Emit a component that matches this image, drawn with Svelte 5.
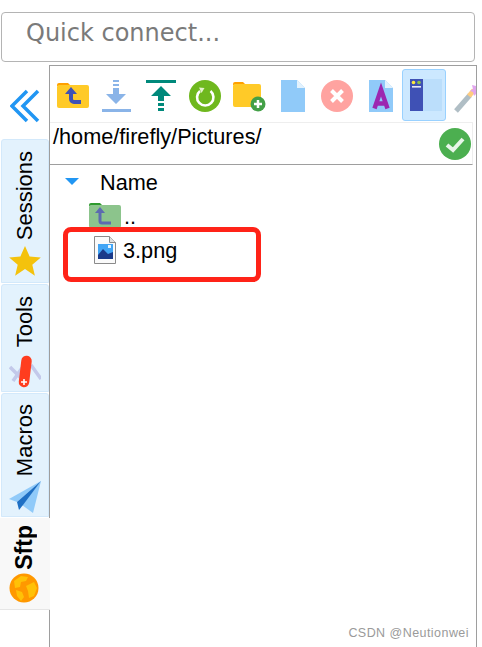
<script>
  const tabs = [
    { name: "Sessions", h: 144 },
    { name: "Tools", h: 108 },
    { name: "Macros", h: 124 },
    { name: "Sftp", h: 92, active: true }
  ];
</script>

<div class="page">
  <div class="quick">Quick connect...</div>

  <div class="body">
    <aside class="side">
      <div class="collapse">
        <svg width="30" height="34" viewBox="0 0 30 34" fill="none" stroke="#2196f3" stroke-width="3.5">
          <path d="M17 2 2 17l15 15" />
          <path d="M28 2 13 17l15 15" />
        </svg>
      </div>
      {#each tabs as t}
        <div class="tab {t.name.toLowerCase()}" class:active={t.active} style="height: {t.h}px">
          <span class="label">{t.name}</span>
          <span class="tab-icon">
            {#if t.name === "Sessions"}
              <svg width="32" height="32" viewBox="0 0 32 32"><path fill="#f4c20d" d="M16 1l4.6 10.4 11.2 1-8.5 7.4 2.6 11L16 24l-9.9 6.8 2.6-11L.2 12.4l11.2-1z" /></svg>
            {:else if t.name === "Tools"}
              <svg width="32" height="34" viewBox="0 0 32 34">
                <path fill="none" stroke="#c3c9ea" stroke-width="3.5" d="M1 12l14 14M4 26l9-13M22 10l10 14" />
                <path fill="none" stroke="#ff3d1f" stroke-width="10.5" stroke-linecap="round" d="M17.5 6 15 27" />
                <path stroke="#fff" stroke-width="1.6" d="M15 24v6M12 27h6" />
              </svg>
            {:else if t.name === "Macros"}
              <svg width="32" height="32" viewBox="0 0 32 32">
                <path fill="#90caf9" d="M32 0 0 18l8 3L32 0z" />
                <path fill="#90caf9" d="M32 0 13 24l11 8z" />
                <path fill="#1e6fc4" d="M32 0 8 21l2 8 4-5z" />
              </svg>
            {:else}
              <svg class="globe" width="30" height="30" viewBox="0 0 30 30">
                <circle cx="15" cy="15" r="14.5" fill="#ff9800" />
                <path fill="#ffc107" d="M5 8l7-5 7 1-2 4-5 1-1 5-5 1zM17 13l8-4 3 6-3 8-5 2-1-7zM7 17l6 2 2 5-3 4-4-5z" />
              </svg>
            {/if}
          </span>
        </div>
      {/each}
    </aside>

    <main class="panel">
      <div class="toolbar">
        <div class="tool">
          <svg width="32" height="32" viewBox="0 0 32 32">
            <path fill="#ffa000" d="M0 5a2 2 0 0 1 2-2h9l3 3H0z" />
            <rect y="5" width="32" height="23" rx="2" fill="#ffca28" />
            <path fill="none" stroke="#3f51b5" stroke-width="4" d="M14 12v7a3 3 0 0 0 3 3h7" />
            <path fill="#3f51b5" d="M14 7l6 7H8z" />
          </svg>
        </div>
        <div class="tool">
          <svg width="32" height="32" viewBox="0 0 32 32" fill="#8ab4e8">
            <path d="M12 0h6v2h-6zM12 4h6v2h-6zM12 8h6v6h7L15 24 5 14h7zM1 29h29v3H1z" />
          </svg>
        </div>
        <div class="tool">
          <svg width="32" height="32" viewBox="0 0 32 32" fill="#00897b">
            <path d="M1 0h30v3H1zM16 6l10 10h-7v5h-6v-5H6zM13 23h6v3h-6zM13 28h6v3h-6z" />
          </svg>
        </div>
        <div class="tool">
          <svg width="32" height="32" viewBox="0 0 32 32">
            <circle cx="16" cy="16" r="16" fill="#6fb81e" />
            <path fill="none" stroke="#fff" stroke-width="2.6" d="M11 11a8.2 8.2 0 1 0 10.5 0" />
            <path fill="#e4f2cc" d="M10 7.5l5.5.5-3 5z" />
          </svg>
        </div>
        <div class="tool">
          <svg width="32" height="32" viewBox="0 0 32 32">
            <path fill="#ffa000" d="M0 4a2 2 0 0 1 2-2h8l3 3H0z" />
            <rect y="4" width="28" height="23" rx="2" fill="#ffca28" />
            <circle cx="25" cy="24" r="7.5" fill="#43a047" />
            <path stroke="#fff" stroke-width="2.5" d="M25 20v8M21 24h8" />
          </svg>
        </div>
        <div class="tool">
          <svg width="32" height="32" viewBox="0 0 32 32">
            <path fill="#90caf9" d="M4 0h16l8 8v24H4z" />
            <path fill="#e3f2fd" d="M20 0l8 8h-8z" />
          </svg>
        </div>
        <div class="tool">
          <svg width="32" height="32" viewBox="0 0 32 32">
            <circle cx="16" cy="16" r="16" fill="#ffa3a0" />
            <path stroke="#fff" stroke-width="4" d="M10.5 10.5l11 11M21.5 10.5l-11 11" />
          </svg>
        </div>
        <div class="tool">
          <svg width="32" height="32" viewBox="0 0 32 32">
            <path fill="#90caf9" d="M4 0h16l8 8v24H4z" />
            <path fill="#e3f2fd" d="M20 0l8 8h-8z" />
            <path fill="none" stroke="#9c27b0" stroke-width="4.5" d="M9.5 28.5 16 9.5l6.5 19M11 23.5h10" />
          </svg>
        </div>
        <div class="tool selected">
          <svg width="32" height="32" viewBox="0 0 32 32">
            <rect width="32" height="32" fill="#bbdefb" />
            <rect width="13" height="32" fill="#3f51b5" />
            <circle cx="3.5" cy="3.5" r="1.8" fill="#ffeb3b" />
            <circle cx="9" cy="3.5" r="1.8" fill="#8bc34a" />
            <rect x="2" y="7" width="9" height="1.6" fill="#e8eaf6" />
          </svg>
        </div>
        <div class="tool">
          <svg width="32" height="32" viewBox="0 0 32 32">
            <path stroke="#b0bec5" stroke-width="5" d="M3 31 17 15" />
            <path stroke="#ffcc80" stroke-width="5" d="M16 16l5-6" />
            <path fill="#e1a6ee" d="M24 0l1 4 4-1-2 4 4 2-4 2 1 4-4-2-3 3-1-4-3-1 3-2-1-4 4 1z" />
          </svg>
        </div>
      </div>

      <div class="pathbar">
        <span class="path">/home/firefly/Pictures/</span>
        <svg class="ok" width="32" height="32" viewBox="0 0 32 32">
          <circle cx="16" cy="16" r="16" fill="#4caf50" />
          <path fill="none" stroke="#e8f5e9" stroke-width="4" d="M8 17l6 5 10-11" />
        </svg>
      </div>

      <div class="tree">
        <div class="head">
          <span class="caret"></span>
          <span>Name</span>
        </div>
        <div class="row up">
          <svg width="32" height="26" viewBox="0 0 32 26">
            <path fill="#2e9a2e" d="M0 3a2 2 0 0 1 2-2h9l3 3H0z" />
            <rect y="3" width="32" height="23" rx="2" fill="#8cc48c" />
            <path fill="none" stroke="#5c6bb0" stroke-width="3" d="M11 10v9a2 2 0 0 0 2 2h9" />
            <path fill="#5c6bb0" d="M11 5l5 6H6z" />
          </svg>
          <span class="dots">..</span>
        </div>
        <div class="row file">
          <svg width="22" height="28" viewBox="0 0 22 28">
            <path fill="#fafafa" stroke="#8a8a8a" d="M.5.5h15l6 6v21H.5z" />
            <path fill="#e0e0e0" stroke="#8a8a8a" d="M15.5.5v6h6" />
            <rect x="4" y="8" width="15" height="15" fill="#42a5f5" />
            <path fill="#1a3a8a" d="M4 23v-4l5-6 5 5 5-2v7z" />
            <rect x="14" y="9" width="3" height="3" fill="#e3f2fd" />
          </svg>
          <span class="fname">3.png</span>
        </div>
        <div class="mark"></div>
      </div>

      <div class="wm">CSDN @Neutionwei</div>
    </main>
  </div>
</div>

<style>
  :global(body) {
    margin: 0;
    background: #fff;
  }

  .page {
    width: 482px;
    height: 647px;
    overflow: hidden;
    position: relative;
    font-family: "Liberation Sans", Arial, sans-serif;
    color: #000;
  }

  .quick {
    box-sizing: border-box;
    margin: 12px 0 0 1px;
    width: 474px;
    height: 50px;
    border: 1px solid #b4b4b4;
    border-radius: 4px;
    padding-left: 24px;
    line-height: 40px;
    font-family: "DejaVu Sans", Verdana, sans-serif;
    font-size: 24px;
    color: #7a7a7a;
  }

  .body {
    display: flex;
    margin-top: 3px;
    height: 582px;
  }

  .side {
    width: 49px;
    flex: none;
    display: flex;
    flex-direction: column;
    position: relative;
    z-index: 1;
  }

  .collapse {
    height: 74px;
    flex: none;
    box-sizing: border-box;
    padding: 24px 0 0 10px;
  }

  .collapse svg {
    display: block;
  }

  .tab {
    box-sizing: border-box;
    width: 48px;
    margin-left: 1px;
    margin-bottom: 1px;
    flex: none;
    background: #e3f2fd;
    border: 1px solid #d3e9fb;
    border-radius: 3px 3px 0 0;
    display: flex;
    flex-direction: column;
    align-items: center;
    justify-content: flex-end;
    padding-bottom: 4px;
    gap: 4px;
  }

  .tab.tools {
    padding-bottom: 2px;
    gap: 8px;
  }

  .tab.macros {
    padding-bottom: 2px;
    gap: 4px;
  }

  .tab.active {
    width: 50px;
    margin-left: 0;
    background: #f8f8f8;
    border: 0;
    border-bottom: 1px solid #e6e6e6;
    border-radius: 0;
    padding: 0 2px 4px 0;
    gap: 1px;
  }

  .label {
    writing-mode: vertical-rl;
    transform: rotate(180deg);
    font-size: 22px;
    line-height: 24px;
  }

  .active .label {
    font-weight: bold;
    font-size: 23px;
  }

  .tab-icon {
    display: flex;
    height: 34px;
    align-items: center;
  }

  .panel {
    box-sizing: border-box;
    width: 428px;
    flex: none;
    border: 1px solid #9e9e9e;
    border-bottom: 0;
    position: relative;
    overflow: hidden;
  }

  .toolbar {
    display: flex;
    height: 56px;
    padding-left: 1px;
  }

  .tool {
    box-sizing: border-box;
    width: 44px;
    flex: none;
    display: flex;
    align-items: center;
    justify-content: center;
    padding-top: 4px;
    height: 56px;
  }

  .tool svg {
    display: block;
    overflow: visible;
  }

  .tool.selected {
    height: 52px;
    margin: 3px 1px 0 -1px;
    padding: 0 3px 0 0;
    justify-content: flex-end;
    background: #cce8ff;
    border: 1px solid #99d1ff;
    border-radius: 3px;
  }

  .pathbar {
    box-sizing: border-box;
    height: 43px;
    margin-right: 3px;
    border-top: 1px solid #eeeeee;
    border-bottom: 1px solid #9e9e9e;
    border-right: 1px solid #eeeeee;
    padding-left: 3px;
    position: relative;
    font-size: 21.7px;
    line-height: 28px;
  }

  .ok {
    position: absolute;
    right: 1px;
    top: 5px;
  }

  .tree {
    position: relative;
    font-size: 21.7px;
  }

  .head {
    display: flex;
    align-items: center;
    height: 36px;
    padding-left: 15px;
    gap: 21px;
  }

  .caret {
    width: 0;
    height: 0;
    margin-top: -3px;
    border-left: 7px solid transparent;
    border-right: 7px solid transparent;
    border-top: 7px solid #2196f3;
  }

  .row {
    display: flex;
    align-items: center;
  }

  .up {
    height: 27px;
    padding-left: 39px;
    gap: 3px;
  }

  .dots {
    align-self: flex-end;
    line-height: 22px;
  }

  .file {
    height: 36px;
    padding: 4px 0 0 44px;
    gap: 7px;
  }

  .fname {
    margin-top: 2px;
  }

  .mark {
    box-sizing: border-box;
    position: absolute;
    left: 13px;
    top: 62px;
    width: 198px;
    height: 55px;
    border: 5px solid #ff2318;
    border-radius: 8px;
  }

  .wm {
    position: absolute;
    right: 7px;
    bottom: 7px;
    font-size: 12.5px;
    line-height: 14px;
    color: #9a9a9a;
    letter-spacing: 0.45px;
  }
</style>
